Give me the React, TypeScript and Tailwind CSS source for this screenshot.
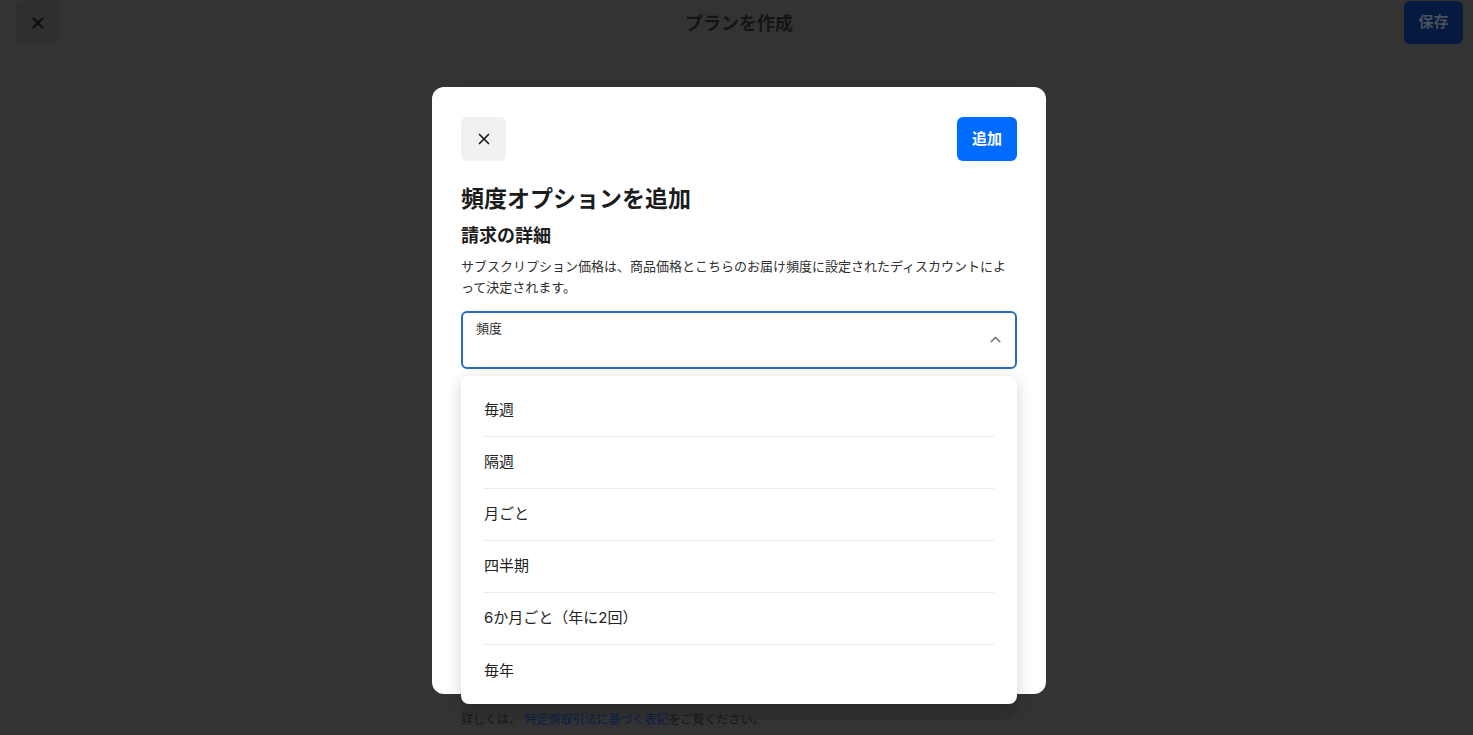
import { X, ChevronUp } from 'lucide-react';

const FREQUENCIES = ['毎週', '隔週', '月ごと', '四半期', '6か月ごと（年に2回）', '毎年'];

const font = "font-['Inter','Noto_Sans_CJK_JP',sans-serif]";

export default function App() {
  return (
    <div className={`relative h-[735px] w-full overflow-hidden bg-[#333333] ${font}`}>
      {/* page behind the dialog (already dimmed) */}
      <header className="flex h-[47px] items-center justify-between px-[15px]">
        <button className="mt-[-2px] flex h-[43px] w-[45px] items-center justify-center rounded-lg bg-[#2f2f2f]">
          <X className="h-[18px] w-[18px] text-[#0d0d0d]" strokeWidth={2.4} />
        </button>
        <h1 className="ml-[14px] text-[18px] font-bold text-[#141414]">プランを作成</h1>
        <button className="mr-[-5px] mt-[-2px] flex h-[43px] w-[59px] items-center justify-center rounded-md bg-[#051a3e] text-[15px] font-bold text-[#4a505a]">
          保存
        </button>
      </header>
      <div className="ml-[463px] mt-[33px] h-[640px] w-[554px] rounded-xl bg-[#303030]" />
      <p className="absolute left-[461px] top-[711px] text-[12px] text-[#151515]">
        詳しくは、 <span className="text-[#0c1f44]">特定商取引法に基づく表記</span>をご覧ください。
      </p>

      {/* dialog */}
      <div className="absolute inset-0 flex justify-center pt-[87px]">
        <div className="ml-[5px] h-[607px] w-[614px] rounded-xl bg-white px-[29px] pt-[30px]">
          <div className="flex items-center justify-between">
            <button className="flex h-[44px] w-[45px] items-center justify-center rounded-md bg-[#f1f1f1]">
              <X className="h-[18px] w-[18px] text-[#1a1a1a]" strokeWidth={2.2} />
            </button>
            <button className="flex h-[44px] w-[60px] items-center justify-center rounded-md bg-[#006bff] text-[15px] font-bold text-white">
              追加
            </button>
          </div>
          <h2 className="mt-[22px] text-[23px] font-bold leading-[32px] text-[#1c1c1c]">頻度オプションを追加</h2>
          <h3 className="mt-[8px] text-[18px] font-bold leading-[26px] text-[#1c1c1c]">請求の詳細</h3>
          <p className="mt-[7px] text-[13px] leading-[21px] text-[#303030]">
            サブスクリプション価格は、商品価格とこちらのお届け頻度に設定されたディスカウントによって決定されます。
          </p>
          <div className="relative mt-[13px]">
            <div className="flex h-[58px] items-start justify-between rounded-md border-2 border-[#2a6bc8] bg-white pl-[13px] pr-[11px] pt-[6px]">
              <span className="text-[13px] text-[#303030]">頻度</span>
              <ChevronUp className="mt-[12px] h-[17px] w-[17px] text-[#7a7a7a]" strokeWidth={2} />
            </div>
            <ul className="absolute left-0 right-0 top-[65px] rounded-lg bg-white px-[23px] pb-[7px] pt-[9px] shadow-[0_4px_16px_rgba(0,0,0,0.18)]">
              {FREQUENCIES.map((label, idx) => (
                <li
                  key={label}
                  className={`flex h-[52px] items-center text-[15px] text-[#222222] ${
                    idx < FREQUENCIES.length - 1 ? 'border-b border-[#ececec]' : ''
                  }`}
                >
                  {label}
                </li>
              ))}
            </ul>
          </div>
        </div>
      </div>
    </div>
  );
}
